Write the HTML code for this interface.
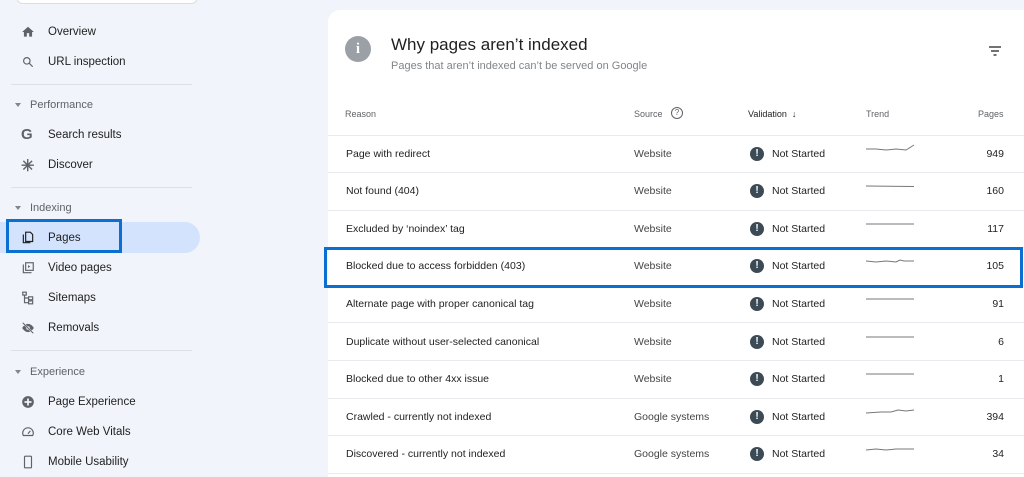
<!DOCTYPE html><html><head><style>
html,body{margin:0;width:1024px;height:477px;overflow:hidden}
body{background:#f1f4fa;font-family:"Liberation Sans",sans-serif;position:relative;color:#1f1f1f}
.a{position:absolute;white-space:nowrap}
.nav{font-size:11.5px;color:#1f1f1f;left:48px}
.sec{font-size:11px;color:#5f6368;left:30px}
.car{left:15px;width:0;height:0;border-left:3.5px solid transparent;border-right:3.5px solid transparent;border-top:4px solid #80868b}
.hr{left:11px;width:181px;height:1px;background:#dde1e6}
.ic{left:21px;width:14px;height:14px}
.card{left:328px;top:10px;width:710px;height:467px;background:#fff;border-radius:12px 12px 0 0}
.row{left:328px;width:696px;height:1px;background:#e8eaed}
.t{font-size:10.5px;color:#1f1f1f}
.h{font-size:9px;color:#5f6368}
.ex{width:14px;height:14px;border-radius:50%;background:#3c4a55;color:#fff;font-size:10px;font-weight:bold;text-align:center;line-height:14px}
</style></head><body>
<div class="a" style="left:16px;top:-10px;width:180px;height:12px;border:1px solid #dadce0;border-radius:8px;background:#fff"></div>
<div class="a" style="left:0;top:222px;width:200px;height:31px;background:#d3e3fd;border-radius:0 16px 16px 0"></div>
<div class="a" style="left:6px;top:219px;width:110px;height:28px;border:3px solid #0a6fd1"></div>

<svg class="a ic" style="top:25px" viewBox="0 0 24 24"><path d="M10 20v-6h4v6h5v-8h3L12 3 2 12h3v8z" fill="#5f6368"/></svg>
<div class="a nav" style="top:26px">Overview</div>
<svg class="a ic" style="top:55px" viewBox="0 0 24 24"><circle cx="10" cy="10" r="5.5" fill="none" stroke="#5f6368" stroke-width="2"/><path d="M14 14l6 6" stroke="#5f6368" stroke-width="2"/></svg>
<div class="a nav" style="top:56px">URL inspection</div>
<div class="a hr" style="top:84px"></div>
<div class="a car" style="top:103px"></div><div class="a sec" style="top:99px">Performance</div>
<div class="a" style="left:21px;top:126px;font-size:15px;font-weight:bold;color:#5f6368">G</div>
<div class="a nav" style="top:129px">Search results</div>
<div class="a" style="left:21px;top:156px;font-size:16px;font-weight:bold;color:#5f6368">✳</div>
<div class="a nav" style="top:159px">Discover</div>
<div class="a hr" style="top:187px"></div>
<div class="a car" style="top:206px"></div><div class="a sec" style="top:202px">Indexing</div>
<svg class="a ic" style="top:231px" viewBox="0 0 24 24"><path d="M4 6v14h12" fill="none" stroke="#1f1f1f" stroke-width="2"/><path d="M8 2h8l4 4v12H8z" fill="none" stroke="#1f1f1f" stroke-width="2"/></svg>
<div class="a nav" style="top:232px">Pages</div>
<svg class="a ic" style="top:261px" viewBox="0 0 24 24"><path d="M4 6v14h14" fill="none" stroke="#5f6368" stroke-width="2"/><rect x="8" y="3" width="13" height="13" fill="none" stroke="#5f6368" stroke-width="2"/><path d="M12 7v5l4-2.5z" fill="#5f6368"/></svg>
<div class="a nav" style="top:262px">Video pages</div>
<svg class="a ic" style="top:291px" viewBox="0 0 24 24"><rect x="3" y="2" width="6" height="5" fill="none" stroke="#5f6368" stroke-width="2"/><rect x="13" y="10" width="7" height="5" fill="none" stroke="#5f6368" stroke-width="2"/><rect x="13" y="17" width="7" height="5" fill="none" stroke="#5f6368" stroke-width="2"/><path d="M6 7v13h7M6 12h7" fill="none" stroke="#5f6368" stroke-width="2"/></svg>
<div class="a nav" style="top:292px">Sitemaps</div>
<svg class="a ic" style="top:321px" viewBox="0 0 24 24"><path d="M2 12s4-7 10-7 10 7 10 7-4 7-10 7S2 12 2 12z" fill="#5f6368"/><circle cx="12" cy="12" r="3" fill="#f1f4fa"/><path d="M3 3l18 18" stroke="#f1f4fa" stroke-width="3"/><path d="M3 3l18 18" stroke="#5f6368" stroke-width="1.6"/></svg>
<div class="a nav" style="top:322px">Removals</div>
<div class="a hr" style="top:350px"></div>
<div class="a car" style="top:370px"></div><div class="a sec" style="top:366px">Experience</div>
<svg class="a ic" style="top:395px" viewBox="0 0 24 24"><circle cx="12" cy="12" r="10" fill="#5f6368"/><path d="M12 6v12M6 12h12" stroke="#f1f4fa" stroke-width="3"/></svg>
<div class="a nav" style="top:396px">Page Experience</div>
<svg class="a ic" style="top:425px" viewBox="0 0 24 24"><path d="M4 18a9 9 0 1 1 16 0z" fill="none" stroke="#5f6368" stroke-width="2"/><path d="M12 15l4-5" stroke="#5f6368" stroke-width="2"/></svg>
<div class="a nav" style="top:426px">Core Web Vitals</div>
<svg class="a ic" style="top:455px" viewBox="0 0 24 24"><rect x="6" y="2" width="12" height="20" rx="1.5" fill="none" stroke="#5f6368" stroke-width="2"/></svg>
<div class="a nav" style="top:456px">Mobile Usability</div>

<div class="a card"></div>
<div class="a" style="left:345px;top:36px;width:26px;height:26px;border-radius:50%;background:#9aa0a6;color:#fff;text-align:center;font:bold 15px/26px 'Liberation Serif',serif">i</div>
<div class="a" style="left:391px;top:35px;font-size:17px;color:#1f1f1f">Why pages aren’t indexed</div>
<div class="a" style="left:391px;top:60px;font-size:11px;color:#80868b">Pages that aren’t indexed can’t be served on Google</div>
<svg class="a" style="left:988px;top:45px" width="14" height="12" viewBox="0 0 14 12"><path d="M1 2h12M3 6h8M5.5 10h3" stroke="#444" stroke-width="1.5"/></svg>

<div class="a h" style="left:345px;top:109px">Reason</div>
<div class="a h" style="left:634px;top:109px">Source</div>
<div class="a" style="left:671px;top:107px;width:10px;height:10px;border:1px solid #5f6368;border-radius:50%;font-size:8px;text-align:center;line-height:10px;color:#5f6368">?</div>
<div class="a h" style="left:748px;top:109px;color:#1f1f1f">Validation &nbsp;↓</div>
<div class="a h" style="left:866px;top:109px">Trend</div>
<div class="a h" style="left:978px;top:109px">Pages</div>
<div class="a row" style="top:135px"></div>

<div id="rows"></div>
<script>
var d=[["Page with redirect","Website","949","M0 6L10 6L20 7L30 6L40 7L48 2"],["Not found (404)","Website","160","M0 6L48 6.5"],["Excluded by ‘noindex’ tag","Website","117","M0 6L48 6"],["Blocked due to access forbidden (403)","Website","105","M0 6L10 7L20 6L30 7L34 5L38 6L48 6"],["Alternate page with proper canonical tag","Website","91","M0 6L48 6"],["Duplicate without user-selected canonical","Website","6","M0 6L48 6"],["Blocked due to other 4xx issue","Website","1","M0 6L48 6"],["Crawled - currently not indexed","Google systems","394","M0 7L15 6L25 6L32 4L40 5L48 4"],["Discovered - currently not indexed","Google systems","34","M0 7L10 6L20 7L30 6L40 6L48 6"]];
var h="";d.forEach(function(r,i){var c=153.5+i*37.6;h+='<div class="a t" style="left:346px;top:'+(c-6)+'px">'+r[0]+'</div><div class="a t" style="left:634px;top:'+(c-6)+'px;color:#444">'+r[1]+'</div><div class="a ex" style="left:750px;top:'+(c-7)+'px">!</div><div class="a t" style="left:772px;top:'+(c-6)+'px">Not Started</div><svg class="a" style="left:866px;top:'+(c-11)+'px" width="50" height="12"><path d="'+r[3]+'" fill="none" stroke="#777" stroke-width="1"/></svg><div class="a t" style="right:20px;top:'+(c-6)+'px">'+r[2]+'</div><div class="a row" style="top:'+(c+18.5)+'px"></div>';});
document.getElementById("rows").innerHTML=h;
</script>
<div class="a" style="left:324px;top:247px;width:693px;height:35px;border:3px solid #0a6fd1"></div>
</body></html>
